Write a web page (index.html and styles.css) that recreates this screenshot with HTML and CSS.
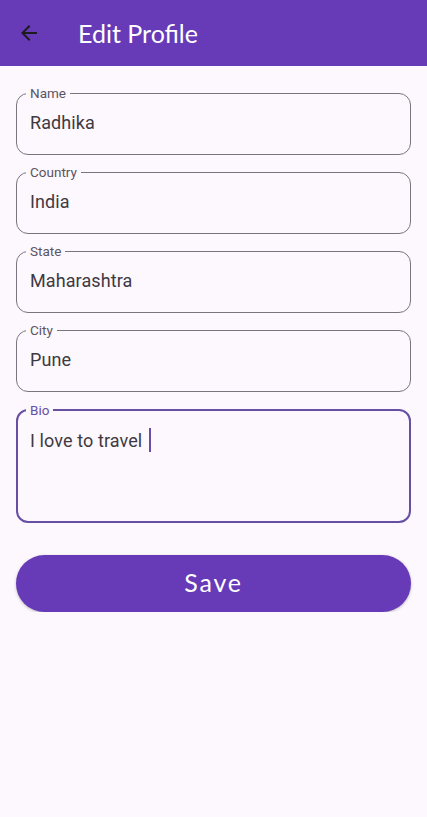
FILE: index.html
```html
<!DOCTYPE html>
<html lang="en">
<head>
<meta charset="utf-8">
<title>Edit Profile</title>
<link rel="stylesheet" href="styles.css">
</head>
<body>
<header class="appbar">
  <button class="back" aria-label="Back">
    <svg width="24" height="24" viewBox="0 0 24 24"><path d="M20 11H7.83l5.59-5.59L12 4l-8 8 8 8 1.41-1.41L7.83 13H20v-2z" fill="#1d1b20"/></svg>
  </button>
  <h1 class="title">Edit Profile</h1>
</header>
<main class="form">
  <fieldset class="field">
    <legend class="label">Name</legend>
    <div class="value">Radhika</div>
  </fieldset>
  <fieldset class="field">
    <legend class="label">Country</legend>
    <div class="value">India</div>
  </fieldset>
  <fieldset class="field">
    <legend class="label">State</legend>
    <div class="value">Maharashtra</div>
  </fieldset>
  <fieldset class="field">
    <legend class="label">City</legend>
    <div class="value">Pune</div>
  </fieldset>
  <fieldset class="field field-focus">
    <legend class="label">Bio</legend>
    <div class="value value-multi">I love to travel <span class="cursor"></span></div>
  </fieldset>
  <button class="save">Save</button>
</main>
</body>
</html>
```
FILE: styles.css
```css
html, body {
  margin: 0;
  padding: 0;
  background: #fdf7fe;
  font-family: Roboto, "Noto Sans", sans-serif;
}
.appbar {
  height: 66px;
  background: #673ab7;
  display: flex;
  align-items: center;
  padding-left: 17px;
  box-sizing: border-box;
}
.back {
  width: 24px;
  height: 24px;
  padding: 0;
  border: 0;
  background: none;
  display: flex;
}
.title {
  margin: 0 0 0 37px;
  font-family: Lato, sans-serif;
  font-weight: 400;
  font-size: 25px;
  letter-spacing: 0;
  color: #ffffff;
}
.form {
  display: flex;
  flex-direction: column;
  gap: 9px;
  padding: 19px 16px 0;
}
.field {
  margin: 0;
  padding: 0 9px;
  border: 1px solid #79747e;
  border-radius: 12px;
  min-width: 0;
}
.label {
  padding: 0 4px;
  font-size: 13.5px;
  line-height: 16px;
  color: #5a5560;
}
.value {
  padding: 8px 4px 17px;
  font-size: 18px;
  line-height: 28px;
  letter-spacing: 0.1px;
  color: #3d3a42;
}
.field-focus {
  margin-top: 1px;
  border: 2px solid #6750a4;
  padding: 0 8px;
}
.field-focus .label {
  color: #6750a4;
}
.value-multi {
  height: 103px;
  box-sizing: border-box;
  padding-top: 9px;
}
.cursor {
  display: inline-block;
  width: 2px;
  height: 24px;
  margin-left: 2px;
  background: #6750a4;
  vertical-align: -5px;
}
.save {
  margin-top: 23px;
  height: 57px;
  padding: 0 0 4px;
  border: 0;
  border-radius: 29px;
  background: #673ab7;
  color: #ffffff;
  font-family: Lato, sans-serif;
  font-size: 25px;
  letter-spacing: 1.8px;
  box-shadow: 0 1px 3px rgba(0,0,0,0.25);
}
```
